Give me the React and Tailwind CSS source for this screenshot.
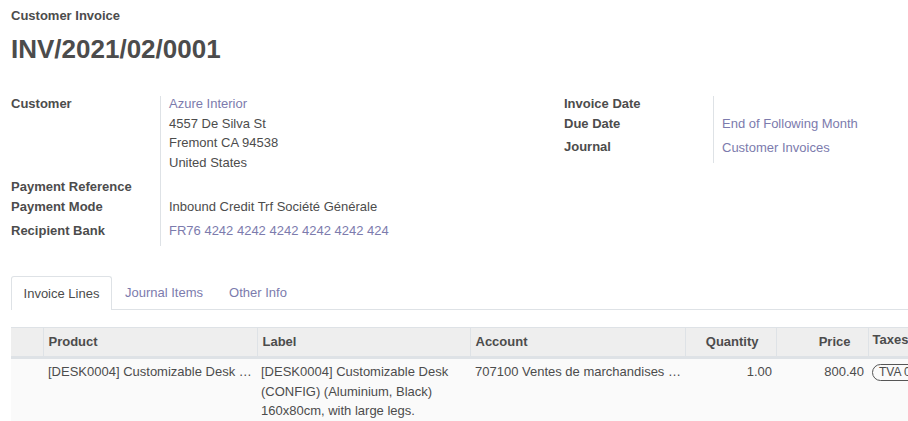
import React from 'react';

const Label = ({ children, className = '' }) => (
  <div className={`font-bold text-[#4c4c4c] ${className}`}>{children}</div>
);

const App = () => {
  return (
    <div className="min-h-[421px] w-[908px] overflow-hidden bg-white text-[13px] leading-[19.5px] text-[#4c4c4c] font-['Liberation_Sans','Arial',sans-serif]">
      <div className="pl-[11px] pt-[6px]">
        {/* Title */}
        <div className="font-bold leading-[19px]">Customer Invoice</div>
        <h1 className="mt-[7px] text-[26px] leading-[34px] font-bold">INV/2021/02/0001</h1>

        {/* Header fields */}
        <div className="mt-[28px] flex items-start">
          <div className="flex w-[553px]">
            <div className="w-[149px] flex flex-col">
              <Label>Customer</Label>
              <div className="h-[63px]" />
              <Label>Payment Reference</Label>
              <Label className="mt-[1px]">Payment Mode</Label>
              <Label className="mt-[4px]">Recipient Bank</Label>
            </div>
            <div className="w-px bg-[#dee2e6] mt-[2px] mb-[-6px]" />
            <div className="pl-[8px] flex flex-col">
              <div className="text-[#7c7bad]">Azure Interior</div>
              <div>4557 De Silva St</div>
              <div>Fremont CA 94538</div>
              <div>United States</div>
              <div className="h-[25px]" />
              <div>Inbound Credit Trf Société Générale</div>
              <div className="mt-[4px] text-[#7c7bad]">FR76 4242 4242 4242 4242 4242 424</div>
            </div>
          </div>
          <div className="flex">
            <div className="w-[149px] flex flex-col">
              <Label>Invoice Date</Label>
              <Label>Due Date</Label>
              <Label className="mt-[4px]">Journal</Label>
            </div>
            <div className="w-px bg-[#dee2e6] mt-[2px] mb-[-6px]" />
            <div className="pl-[8px] flex flex-col">
              <div className="h-[20px]" />
              <div className="text-[#7c7bad]">End of Following Month</div>
              <div className="mt-[4px] text-[#7c7bad]">Customer Invoices</div>
            </div>
          </div>
        </div>

        {/* Tabs */}
        <div className="mt-[36px] flex border-b border-[#dee2e6]">
          <div className="mb-[-1px] flex h-[34px] w-[101px] items-center justify-center rounded-t-[3px] border border-b-0 border-[#dee2e6] bg-white">
            Invoice Lines
          </div>
          <div className="flex h-[33px] items-center px-[13px] text-[#7c7bad]">Journal Items</div>
          <div className="flex h-[33px] items-center px-[13px] text-[#7c7bad]">Other Info</div>
        </div>

        {/* Lines table */}
        <table className="mt-[17px] w-[960px] table-fixed border-collapse">
          <colgroup>
            <col className="w-[32px]" />
            <col className="w-[214px]" />
            <col className="w-[213px]" />
            <col className="w-[215px]" />
            <col className="w-[91px]" />
            <col className="w-[92px]" />
            <col className="w-[103px]" />
          </colgroup>
          <thead>
            <tr className="h-[30px] border-t border-[#dee2e6] border-b-[3px] border-b-[#dee2e6] bg-[#eeeeee] font-bold">
              <th className="border-r border-[#dee2e6]" />
              <th className="border-r border-[#dee2e6] px-[5px] text-left">Product</th>
              <th className="border-r border-[#dee2e6] px-[5px] text-left">Label</th>
              <th className="border-r border-[#dee2e6] px-[5px] text-left">Account</th>
              <th className="border-r border-[#dee2e6] pr-[17px] text-right">Quantity</th>
              <th className="border-r border-[#dee2e6] pr-[17px] text-right">Price</th>
              <th className="px-[4px] text-left align-top pt-[2px]">Taxes</th>
            </tr>
          </thead>
          <tbody>
            <tr className="h-[64px] bg-[#fafafa] align-top">
              <td />
              <td className="truncate px-[5px] pt-[3px]">[DESK0004] Customizable Desk (CONFIG)</td>
              <td className="px-[4px] pt-[3px]">
                [DESK0004] Customizable Desk (CONFIG) (Aluminium, Black) 160x80cm, with large legs.
              </td>
              <td className="truncate pl-[5px] pr-[2px] pt-[3px]">707100 Ventes de marchandises France</td>
              <td className="pr-[4px] pt-[3px] text-right">1.00</td>
              <td className="pr-[4px] pt-[3px] text-right">800.40</td>
              <td className="px-[4px] pt-[3px]">
                <span className="inline-block rounded-full border-[1.5px] border-[#555555] px-[6px] leading-[15px] text-[12px]">
                  TVA 0%
                </span>
              </td>
            </tr>
          </tbody>
        </table>
      </div>
    </div>
  );
};

export default App;
